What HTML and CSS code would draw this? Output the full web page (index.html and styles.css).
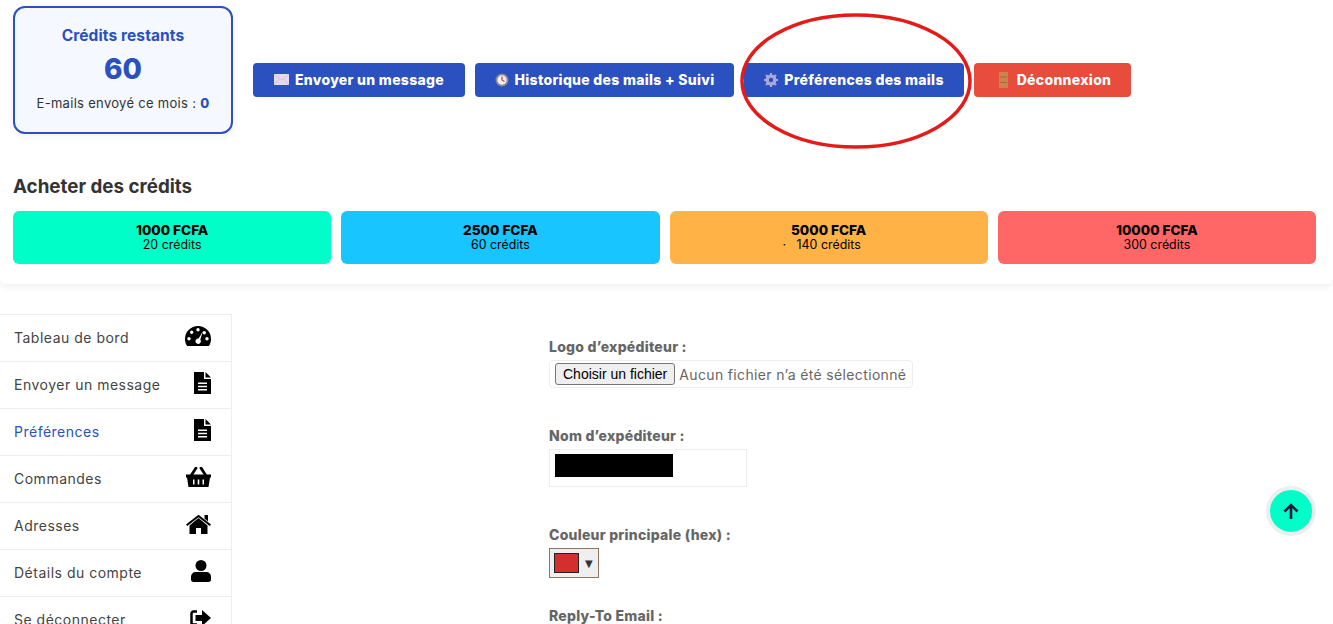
FILE: index.html
```html
<!DOCTYPE html>
<html lang="fr">
<head>
    <meta charset="UTF-8">
    <title>Préférences des mails</title>
    <link rel="stylesheet" href="styles.css">
</head>
<body>
    <header class="top-panel">
        <div class="top-row">
            <div class="credit-box">
                <div class="credit-title">Crédits restants</div>
                <div class="credit-count">60</div>
                <div class="credit-sent">E-mails envoyé ce mois : <b>0</b></div>
            </div>
            <nav class="top-actions">
                <a class="action action-mail" href="#">
                    <svg class="emoji" width="15" height="11" viewBox="0 0 15 11"><rect width="15" height="11" fill="#e6d8f2"/><path d="M0 0l7.5 6L15 0M0 11l5.5-6.500M15 11L9.500 4.500" fill="none" stroke="#cdbbe3" stroke-width=".8"/></svg>
                    Envoyer un message
                </a>
                <a class="action action-history" href="#">
                    <svg class="emoji" width="14" height="14" viewBox="0 0 14 14"><circle cx="7" cy="7" r="6.500" fill="#8b8794"/><circle cx="7" cy="7" r="4.700" fill="#f3eef2"/><path d="M7 3.500V7l2.500 1.500" fill="none" stroke="#b5453f" stroke-width="1.200"/></svg>
                    Historique des mails + Suivi
                </a>
                <a class="action action-prefs" href="#">
                    <svg class="emoji" width="14" height="14" viewBox="0 0 14 14"><circle cx="7" cy="7" r="4" fill="none" stroke="#a9a8d8" stroke-width="3"/><path d="M7 0v14M0 7h14M2 2l10 10M12 2L2 12" stroke="#a9a8d8" stroke-width="2.200"/><circle cx="7" cy="7" r="2.200" fill="#2b50c0"/></svg>
                    Préférences des mails
                </a>
                <a class="action action-logout" href="#">
                    <svg class="emoji emoji-door" width="9" height="16" viewBox="0 0 9 16"><rect width="9" height="16" fill="#c9844f"/><path d="M1 5h7M1 10.500h7" stroke="#a9683a" stroke-width="1"/></svg>
                    Déconnexion
                </a>
            </nav>
        </div>

        <h2 class="buy-title">Acheter des crédits</h2>
        <div class="buy-grid">
            <a class="pack pack-green" href="#"><b>1000 FCFA</b><span>20 crédits</span></a>
            <a class="pack pack-blue" href="#"><b>2500 FCFA</b><span>60 crédits</span></a>
            <a class="pack pack-orange" href="#"><b>5000 FCFA</b><span>·&nbsp;&nbsp;&nbsp;140 crédits&nbsp;&nbsp;&nbsp;&nbsp;</span></a>
            <a class="pack pack-red" href="#"><b>10000 FCFA</b><span>300 crédits</span></a>
        </div>
    </header>

    <svg class="circle-mark" width="236" height="140" viewBox="0 0 236 140"><ellipse cx="117" cy="70" rx="114" ry="66" fill="none" stroke="#e31b1b" stroke-width="3.500"/></svg>

    <main class="content">
        <ul class="side-menu">
            <li><a href="#">Tableau de bord</a>
                <svg class="side-icon" width="26" height="20" viewBox="0 0 26 20"><path fill-rule="evenodd" d="M13 0a13 13 0 0 1 13 13c0 2.500-.6 4.800-1.800 6.400-.3.400-.7.600-1.200.6H3c-.5 0-.9-.2-1.200-.6C.6 17.800 0 15.500 0 13A13 13 0 0 1 13 0zM4 11a1.700 1.700 0 1 0 0 3.400A1.700 1.700 0 0 0 4 11zm2.700-6.400a1.700 1.700 0 1 0 0 3.400 1.700 1.700 0 0 0 0-3.400zM13 2a1.700 1.700 0 1 0 0 3.400A1.700 1.700 0 0 0 13 2zm9 9a1.700 1.700 0 1 0 0 3.400 1.700 1.700 0 0 0 0-3.400zM17.800 5.400l-4.200 7.200a2.700 2.700 0 1 0 1.700 1zM19.300 5a1.700 1.700 0 1 0 0 3.400 1.700 1.700 0 0 0 0-3.400z"/></svg>
            </li>
            <li><a href="#">Envoyer un message</a>
                <svg class="side-icon" width="17" height="22" viewBox="0 0 17 22"><path fill-rule="evenodd" d="M0 0h10v7h7v15H0zM11.500 0L17 5.500h-5.500zM4 10.500v1.500h9v-1.500zm0 3.200v1.500h9v-1.500zm0 3.200v1.500h9v-1.500z"/></svg>
            </li>
            <li><a class="current" href="#">Préférences</a>
                <svg class="side-icon" width="17" height="22" viewBox="0 0 17 22"><path fill-rule="evenodd" d="M0 0h10v7h7v15H0zM11.500 0L17 5.500h-5.500zM4 10.500v1.500h9v-1.500zm0 3.200v1.500h9v-1.500zm0 3.200v1.500h9v-1.500z"/></svg>
            </li>
            <li><a href="#">Commandes</a>
                <svg class="side-icon" width="25" height="20" viewBox="0 0 25 20"><path fill-rule="evenodd" d="M0 7.500h25v3h-1L22.500 20h-20L1 10.500H0zM7 12.500v5h1.500v-5zm4.700 0v5h1.600v-5zm4.800 0v5H18v-5z"/><path d="M5.500 8L10 1M19.500 8L15 1" fill="none" stroke="#000" stroke-width="2.800" stroke-linecap="round"/></svg>
            </li>
            <li><a href="#">Adresses</a>
                <svg class="side-icon" width="25" height="20" viewBox="0 0 25 20"><path d="M12.500 4L3.500 11.500V20H10v-6h5v6h6.500v-8.500z"/><path d="M0 10.500L12.500.8 25 10.500l-1.300 1.500L12.500 3.300 1.300 12z"/><path d="M18.500 1h3.500v6.500l-3.500-3z"/></svg>
            </li>
            <li><a href="#">Détails du compte</a>
                <svg class="side-icon" width="20" height="22" viewBox="0 0 20 22"><circle cx="10" cy="5.500" r="5.500"/><path d="M5 12h10c3 0 5 2 5 5v2.500c0 1.500-1 2.500-2.500 2.500h-15C1 22 0 21 0 19.500V17c0-3 2-5 5-5z"/></svg>
            </li>
            <li><a href="#">Se déconnecter</a>
                <svg class="side-icon" width="22" height="18" viewBox="0 0 22 18"><path d="M8 2.500H4.500A2 2 0 0 0 2.500 4.500v9a2 2 0 0 0 2 2H8" fill="none" stroke="#000" stroke-width="2.500"/><path d="M6.500 6H13V1l9 8-9 8v-5H6.500z"/></svg>
            </li>
        </ul>

        <form class="prefs-form">
            <div class="field">
                <label>Logo d’expéditeur :</label>
                <div class="file-input">
                    <button type="button" class="file-btn">Choisir un fichier</button>
                    <span>Aucun fichier n’a été sélectionné</span>
                </div>
            </div>
            <div class="field field-name">
                <label>Nom d’expéditeur :</label>
                <div class="text-input"><div class="redacted"></div></div>
            </div>
            <div class="field field-color">
                <label>Couleur principale (hex) :</label>
                <div class="color-input"><span class="color-swatch"></span><span class="color-arrow">▼</span></div>
            </div>
            <div class="field field-reply">
                <label>Reply-To Email :</label>
            </div>
        </form>
    </main>

    <a class="to-top" href="#">
        <svg width="16" height="17" viewBox="0 0 16 17"><path d="M8 16V2M1.500 8.500L8 2l6.500 6.500" fill="none" stroke="#1b1b3a" stroke-width="2.600"/></svg>
    </a>
</body>
</html>
```

FILE: styles.css
```css
html, body {
    margin: 0;
    padding: 0;
    height: 624px;
    overflow: hidden;
}

body {
    position: relative;
    background: #fff;
    color: #333;
    font-family: "Inter", "Liberation Sans", sans-serif;
    font-size: 14px;
}

a {
    text-decoration: none;
    color: inherit;
}

.top-panel {
    box-sizing: border-box;
    height: 284px;
    padding: 6px 17px 0 13px;
    border-radius: 0 0 6px 6px;
    box-shadow: 0 2px 10px rgba(0, 0, 0, .08);
}

.top-row {
    display: flex;
    align-items: center;
    gap: 20px;
}

.credit-box {
    box-sizing: border-box;
    width: 220px;
    height: 128px;
    padding-top: 18px;
    border: 2px solid #2b50c0;
    border-radius: 12px;
    background: #f5f8ff;
    box-shadow: 0 2px 8px rgba(0, 0, 0, .06);
    text-align: center;
}

.credit-title {
    color: #2b50c0;
    font-size: 15.500px;
    font-weight: 700;
    letter-spacing: .1px;
    line-height: 20px;
}

.credit-count {
    margin-top: 5px;
    color: #2b50c0;
    font-size: 28px;
    font-weight: 800;
    line-height: 36px;
}

.credit-sent {
    margin-top: 7px;
    font-size: 13px;
    letter-spacing: .3px;
    line-height: 18px;
}

.credit-sent b {
    color: #2b50c0;
    font-weight: 800;
}

.top-actions {
    display: flex;
    gap: 10px;
    margin-top: 20px;
}

.action {
    box-sizing: border-box;
    display: flex;
    align-items: center;
    justify-content: center;
    gap: 6px;
    height: 34px;
    padding-bottom: 1px;
    border-radius: 4px;
    color: #fff;
    font-size: 14px;
    font-weight: 800;
    letter-spacing: .3px;
}

.action-mail { width: 212px; background: #2b50c0; }
.action-history { width: 259px; background: #2b50c0; }
.action-prefs { width: 220px; background: #2b50c0; }
.action-logout { width: 157px; background: #e74c3c; }

.emoji-door {
    margin: 0 3px 0 5px;
}

.buy-title {
    margin: 41px 0 0;
    color: #333;
    font-size: 18.800px;
    font-weight: 700;
    line-height: 24px;
}

.buy-grid {
    display: grid;
    grid-template-columns: repeat(4, 1fr);
    gap: 10px;
    margin-top: 12px;
}

.pack {
    box-sizing: border-box;
    display: flex;
    flex-direction: column;
    align-items: center;
    justify-content: center;
    height: 53px;
    padding-bottom: 2px;
    border-radius: 6px;
    color: #000;
}

.pack b {
    font-size: 13.600px;
    font-weight: 800;
    line-height: 16px;
}

.pack span {
    font-size: 12.400px;
    line-height: 14px;
    white-space: nowrap;
}

.pack-green { background: #00ffc8; }
.pack-blue { background: #18c5ff; }
.pack-orange { background: #ffb347; }
.pack-red { background: #ff6666; }

.circle-mark {
    position: absolute;
    left: 739px;
    top: 11px;
}

.content {
    display: flex;
    margin-top: 30px;
}

.side-menu {
    flex: none;
    width: 231px;
    margin: 0;
    padding: 0;
    border-top: 1px solid #eee;
    border-right: 1px solid #eee;
    list-style: none;
}

.side-menu li {
    box-sizing: border-box;
    display: flex;
    align-items: center;
    justify-content: space-between;
    height: 47px;
    padding: 0 20px 2px 14px;
    border-bottom: 1px solid #eee;
    color: #444;
    font-size: 14px;
    letter-spacing: .5px;
}

.side-menu .current {
    color: #2b50c0;
}

.side-icon {
    display: block;
    margin-bottom: 3px;
}

.prefs-form {
    padding-left: 317px;
}

.field {
    padding-top: 23px;
}

.field label {
    display: block;
    margin-bottom: 3px;
    color: #666;
    font-size: 14px;
    font-weight: 800;
    letter-spacing: .25px;
    line-height: 20px;
}

.file-input {
    box-sizing: border-box;
    display: flex;
    align-items: center;
    gap: 4px;
    width: 364px;
    height: 28px;
    padding: 0 5px;
    border: 1px solid #eee;
    border-radius: 4px;
    color: #666;
    font-size: 14px;
    letter-spacing: .35px;
    white-space: nowrap;
}

.file-btn {
    height: 22px;
    padding: 0 7px;
    border: 1px solid #767676;
    border-radius: 3px;
    background: #efefef;
    color: #000;
    font-family: "Liberation Sans", sans-serif;
    font-size: 14px;
    letter-spacing: 0;
}

.field-name {
    padding-top: 38px;
}

.text-input {
    box-sizing: border-box;
    width: 198px;
    height: 38px;
    padding: 4px 5px;
    border: 1px solid #eee;
}

.redacted {
    width: 118px;
    height: 23px;
    background: #000;
}

.field-color {
    padding-top: 38px;
}

.color-input {
    box-sizing: border-box;
    display: flex;
    align-items: center;
    gap: 6px;
    width: 50px;
    height: 30px;
    padding: 0 4px;
    border: 1px solid #8f7560;
    background: #efefef;
}

.color-swatch {
    box-sizing: border-box;
    flex: none;
    width: 25px;
    height: 20px;
    border: 1.500px solid #222;
    background: #d32f2f;
}

.color-arrow {
    color: #333;
    font-family: "DejaVu Sans", sans-serif;
    font-size: 10px;
}

.field-reply {
    padding-top: 28px;
}

.to-top {
    position: absolute;
    left: 1266px;
    top: 486px;
    box-sizing: border-box;
    display: flex;
    align-items: center;
    justify-content: center;
    width: 50px;
    height: 50px;
    border: 4px solid #eee;
    border-radius: 50%;
    background: #00ffc8;
}
```
